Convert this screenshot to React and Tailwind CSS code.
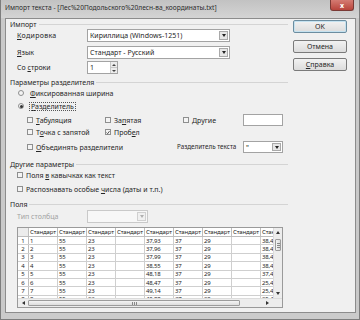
import React from 'react';

function DropBtn({ disabled }) {
  return (
    <div className={`w-[9px] my-[1px] mr-[1px] border flex items-center justify-center ${disabled ? 'border-[#d0d0d0] bg-[#f0f0f0]' : 'border-[#a9a9a9] bg-[#e6e6e6]'}`}>
      <div className={`w-0 h-0 border-l-[2px] border-r-[2px] border-t-[3px] border-l-transparent border-r-transparent ${disabled ? 'border-t-[#b0b0b0]' : 'border-t-[#222]'}`} />
    </div>
  );
}

function Combo({ w, value, disabled }) {
  return (
    <div className={`flex h-full border shrink-0 ${w} ${disabled ? 'border-[#c9c9c9] bg-[#f7f7f7]' : 'border-[#a3a3a3] bg-white'}`}>
      <div className="flex-1 flex items-center pl-[2px] overflow-hidden whitespace-nowrap">{value}</div>
      <DropBtn disabled={disabled} />
    </div>
  );
}

function Heading({ children, cls = '' }) {
  return (
    <div className={`flex items-center pl-[4px] h-[10px] ${cls}`}>
      <span className="whitespace-nowrap">{children}</span>
      <div className="flex-1 ml-[2px] h-px bg-[#d4d4d4]" />
    </div>
  );
}

function Check({ checked }) {
  return (
    <div className="w-[6px] h-[6px] border border-[#8e8f8f] bg-[#f4f4f4] flex items-center justify-center shrink-0">
      {checked && (
        <svg width="5" height="5" viewBox="0 0 5 5">
          <path d="M0.6 2.6 L2 4 L4.4 0.8" stroke="#333" strokeWidth="1" fill="none" />
        </svg>
      )}
    </div>
  );
}

function Radio({ checked }) {
  return (
    <div className="w-[6px] h-[6px] rounded-full border border-[#8e8f8f] bg-[#f4f4f4] flex items-center justify-center shrink-0">
      {checked && <div className="w-[3px] h-[3px] rounded-full bg-[#333]" />}
    </div>
  );
}

function U({ children }) {
  return <span className="underline underline-offset-1">{children}</span>;
}

function Button({ children, def }) {
  return (
    <div className={`h-[13px] w-[54px] rounded-[2px] border flex items-center justify-center bg-gradient-to-b from-[#f2f2f2] to-[#dcdcdc] ${def ? 'border-[#6c8da0] shadow-[inset_0_0_0_1px_#c5e2f0]' : 'border-[#7a7a7a]'}`}>
      {children}
    </div>
  );
}

const rows = [
  ['1', '1', '55', '23', '', '37,93', '37', '29', '', '38,4'],
  ['2', '2', '55', '23', '', '37,96', '37', '29', '', '38,4'],
  ['3', '3', '55', '23', '', '37,99', '37', '29', '', '38,4'],
  ['4', '4', '55', '23', '', '38,55', '37', '29', '', '38,4'],
  ['5', '5', '55', '23', '', '48,18', '37', '29', '', '37,4'],
  ['6', '6', '55', '23', '', '48,47', '37', '29', '', '25,4'],
  ['7', '7', '55', '23', '', '49,14', '37', '29', '', '25,4'],
  ['8', '8', '55', '23', '', '49,88', '37', '29', '', '25,4'],
];

function Table() {
  const cols = 9;
  return (
    <div className="ml-[11px] mt-[4px] w-[266px] h-[81px] border border-[#9a9a9a] bg-white flex flex-col text-[6px] tracking-[-0.15px]">
      <div className="flex h-[70px]">
        <div className="w-[256px] overflow-hidden flex flex-col">
          <div className="flex h-[9px] shrink-0 border-b border-[#bdbdbd]">
            <div className="w-[11px] shrink-0 border-r border-[#bdbdbd] bg-[#ececec]" />
            {Array.from({ length: cols }).map((_, i) => (
              <div key={i} className="w-[29px] shrink-0 border-r border-[#bdbdbd] flex items-center pl-[1px] overflow-hidden whitespace-nowrap">Стандарт</div>
            ))}
          </div>
          {rows.map((r, ri) => (
            <div key={ri} className="flex h-[8.4px] shrink-0 border-b border-[#cfcfcf]">
              <div className="w-[11px] shrink-0 border-r border-[#bdbdbd] flex items-center justify-center">{r[0]}</div>
              {r.slice(1).map((c, ci) => (
                <div key={ci} className="w-[29px] shrink-0 border-r border-[#cfcfcf] flex items-center pl-[1px] overflow-hidden whitespace-nowrap">{c}</div>
              ))}
            </div>
          ))}
        </div>
        <div className="w-[9px] bg-[#ededed] border-l border-[#dcdcdc] flex flex-col">
          <div className="h-[9px] flex items-center justify-center">
            <div className="w-0 h-0 border-l-[2px] border-r-[2px] border-b-[3px] border-l-transparent border-r-transparent border-b-[#333]" />
          </div>
          <div className="mx-[1px] h-[12px] mt-[2px] rounded-[1px] border border-[#9c9c9c] bg-gradient-to-r from-[#f4f4f4] to-[#dddddd] flex flex-col items-center justify-center gap-[1px]">
            <div className="w-[3px] h-px bg-[#888]" />
            <div className="w-[3px] h-px bg-[#888]" />
            <div className="w-[3px] h-px bg-[#888]" />
          </div>
          <div className="flex-1" />
          <div className="h-[9px] flex items-center justify-center">
            <div className="w-0 h-0 border-l-[2px] border-r-[2px] border-t-[3px] border-l-transparent border-r-transparent border-t-[#333]" />
          </div>
        </div>
      </div>
      <div className="flex h-[9px] border-t border-[#dcdcdc] bg-[#ededed]">
        <div className="w-[10px] flex items-center justify-center">
          <div className="w-0 h-0 border-t-[2px] border-b-[2px] border-r-[3px] border-t-transparent border-b-transparent border-r-[#333]" />
        </div>
        <div className="w-[212px] my-[1px] rounded-[1px] border border-[#9c9c9c] bg-gradient-to-b from-[#f4f4f4] to-[#dddddd] flex items-center justify-center gap-[1px]">
          <div className="w-px h-[3px] bg-[#888]" />
          <div className="w-px h-[3px] bg-[#888]" />
          <div className="w-px h-[3px] bg-[#888]" />
        </div>
        <div className="flex-1 flex items-center justify-end pr-[4px]">
          <div className="w-0 h-0 border-t-[2px] border-b-[2px] border-l-[3px] border-t-transparent border-b-transparent border-l-[#333]" />
        </div>
        <div className="w-[9px] bg-[#ededed]" />
      </div>
    </div>
  );
}

export default function App() {
  return (
    <div className="w-[360px] h-[320px] overflow-hidden flex flex-col bg-[#c9c9c9] border-l border-r border-[#7d7d7d] text-[7px] leading-none text-[#262626] font-['Noto_Sans',sans-serif]">
      <div className="h-[18px] shrink-0 flex items-start bg-gradient-to-b from-[#c2c2c2] to-[#d4d4d4]">
        <div className="pl-[4px] pt-[5px] whitespace-nowrap text-[#2a2a2a] text-[6.6px]">Импорт текста - [Лес%20Подольского%20лесн-ва_координаты.txt]</div>
        <div className="ml-auto mr-[5px] w-[24px] h-[11px] rounded-b-[3px] bg-gradient-to-b from-[#d47a72] to-[#b8443c] border border-[#7a3a35] border-t-0 flex items-center justify-center text-white font-bold text-[7px]">x</div>
      </div>
      <div className="ml-[4px] w-[351px] h-[295px] shrink-0 bg-[#f0f0f0] border border-[#8c8c8c] flex">
        <div className="w-[282px] flex flex-col">
          <Heading>Импорт</Heading>
          <div className="flex items-center h-[13px] pl-[11px]">
            <div className="w-[70px] tracking-[0.3px]"><U>К</U>одировка</div>
            <Combo w="w-[143px]" value="Кириллица (Windows-1251)" />
          </div>
          <div className="flex items-center h-[13px] pl-[11px] mt-[4px]">
            <div className="w-[70px]"><U>Я</U>зык</div>
            <Combo w="w-[143px]" value="Стандарт - Русский" />
          </div>
          <div className="flex items-center h-[13px] pl-[11px] mt-[2px]">
            <div className="w-[70px]">Со <U>с</U>троки</div>
            <div className="w-[31px] h-full border border-[#a3a3a3] bg-white flex">
              <div className="flex-1 flex items-center pl-[2px]">1</div>
              <div className="w-[7px] flex flex-col border-l border-[#c8c8c8]">
                <div className="flex-1 flex items-center justify-center bg-[#ececec] border-b border-[#c8c8c8]">
                  <div className="w-0 h-0 border-l-[2px] border-r-[2px] border-b-[2px] border-l-transparent border-r-transparent border-b-[#444]" />
                </div>
                <div className="flex-1 flex items-center justify-center bg-[#ececec]">
                  <div className="w-0 h-0 border-l-[2px] border-r-[2px] border-t-[2px] border-l-transparent border-r-transparent border-t-[#444]" />
                </div>
              </div>
            </div>
          </div>
          <Heading cls="mt-[3px]">Параметры разделителя</Heading>
          <div className="flex items-center h-[10px] mt-[1px] pl-[12px] gap-[6px]">
            <Radio />
            <span><U>Ф</U>иксированная ширина</span>
          </div>
          <div className="flex items-center h-[10px] mt-[3px] pl-[12px] gap-[6px]">
            <Radio checked />
            <span className="outline outline-1 outline-dotted outline-[#555] px-[1px]"><U>Р</U>азделитель</span>
          </div>
          <div className="flex items-center h-[12px] mt-[3px] pl-[21px]">
            <div className="w-[78px] flex items-center gap-[3px]"><Check /><span><U>Т</U>абуляция</span></div>
            <div className="w-[78px] flex items-center gap-[3px]"><Check /><span>За<U>п</U>ятая</span></div>
            <div className="w-[60px] flex items-center gap-[3px]"><Check /><span><U>Д</U>ругие</span></div>
            <div className="w-[40px] h-full border border-[#a3a3a3] bg-white" />
          </div>
          <div className="flex items-center h-[10px] mt-[1px] pl-[21px]">
            <div className="w-[78px] flex items-center gap-[3px]"><Check /><span>Т<U>о</U>чка с запятой</span></div>
            <div className="w-[78px] flex items-center gap-[3px]"><Check checked /><span>Проб<U>е</U>л</span></div>
          </div>
          <div className="flex items-center h-[12px] mt-[4px] pl-[21px]">
            <div className="w-[150px] flex items-center gap-[3px]"><Check /><span><U>О</U>бъединять разделители</span></div>
            <div className="w-[66px] whitespace-nowrap text-[6.3px]">Разделитель текста</div>
            <Combo w="w-[40px]" value={'"'} />
          </div>
          <Heading cls="mt-[6px]">Другие параметры</Heading>
          <div className="flex items-center h-[10px] mt-[1px] pl-[11px] gap-[3px]">
            <Check /><span>Поля <U>в</U> кавычках как текст</span>
          </div>
          <div className="flex items-center h-[10px] mt-[4px] pl-[11px] gap-[3px]">
            <Check /><span>Распознавать особые <U>ч</U>исла (даты и т.п.)</span>
          </div>
          <Heading cls="mt-[5px]">Поля</Heading>
          <div className="flex items-center h-[13px] mt-[1px] pl-[11px]">
            <div className="w-[70px] text-[#a2a2a2]">Тип столбца</div>
            <Combo w="w-[61px]" value="" disabled />
          </div>
          <Table />
        </div>
        <div className="flex flex-col pl-[5px] pt-[1px]">
          <Button def>OK</Button>
          <div className="mt-[7px]"><Button>Отмена</Button></div>
          <div className="mt-[5px]"><Button><span><U>С</U>правка</span></Button></div>
        </div>
      </div>
      <div className="flex-1 bg-[#cbcbcb] border-b border-[#7d7d7d]" />
    </div>
  );
}
